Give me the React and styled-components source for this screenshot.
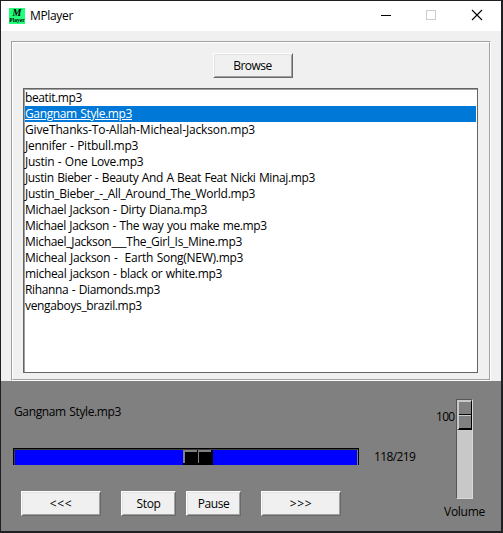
import React from "react";
import styled, { createGlobalStyle } from "styled-components";

const GlobalStyle = createGlobalStyle`
  * { box-sizing: border-box; }
  body {
    margin: 0;
    overflow: hidden;
    font: 12px/16px "Open Sans", "Noto Sans", sans-serif;
    color: #000;
  }
`;

const Window = styled.div`
  width: 503px;
  height: 533px;
  border: 1px solid #202022;
  border-right-width: 2px;
  border-bottom-width: 2px;
  background: #f0f0f0;
  display: flex;
  flex-direction: column;
`;

const TitleBar = styled.header`
  height: 30px;
  flex: none;
  background: #fff;
  display: flex;
  align-items: center;
  padding-left: 8px;
`;

const Label = styled.span`
  white-space: pre;
  letter-spacing: ${(p) => p.$track || 0}px;
  word-spacing: 0.7px;
`;

const Title = styled(Label)`
  flex: 1;
  margin-left: 5px;
`;

const AppIcon = styled.div`
  width: 16px;
  height: 16px;
  background: #21ff7b;
  font-family: "Liberation Serif", serif;
  text-align: center;
  white-space: nowrap;
`;

const IconInitial = styled.div`
  height: 9px;
  font-size: 10px;
  line-height: 9px;
  font-style: italic;
  font-weight: bold;
`;

const IconWord = styled.div`
  height: 7px;
  font-size: 5.5px;
  line-height: 7px;
  font-weight: bold;
`;

const Caption = styled.svg`
  width: 46px;
  height: 30px;
  display: block;
  shape-rendering: ${(p) => (p.$smooth ? "auto" : "crispEdges")};
`;

const Content = styled.main`
  height: 350px;
  flex: none;
  padding: 10px 10px 0;
`;

const Groove = styled.section`
  width: 480px;
  height: 340px;
  border: 1px solid #a0a0a0;
  border-right-color: #fff;
  border-bottom-color: #fff;
`;

const GrooveInner = styled.div`
  height: 100%;
  border: 1px solid #fff;
  border-right-color: #a0a0a0;
  border-bottom-color: #a0a0a0;
  padding: 10px 11px 0 10px;
  display: flex;
  flex-direction: column;
  align-items: center;
`;

const Button = styled.button`
  width: ${(p) => p.$w}px;
  height: 25px;
  flex: none;
  padding: 1px 0 0;
  font: inherit;
  color: inherit;
  background: #f0f0f0;
  border: 1px solid;
  border-color: #fff #696969 #696969 #fff;
  box-shadow: inset 1px 1px #e3e3e3, inset -1px -1px #a0a0a0;
`;

const BrowseButton = styled(Button)`
  margin-left: 4px;
`;

const Playlist = styled.ul`
  width: 455px;
  height: 285px;
  margin: 10px 0 0;
  padding: 1px 1px 0 1px;
  list-style: none;
  background: #fff;
  border: 1px solid #646464;
  box-shadow: inset 1px 1px #a0a0a0;
`;

const Track = styled.li`
  height: 16px;
  line-height: 16px;
  color: ${(p) => (p.$selected ? "#fff" : "#000")};
  background: ${(p) => (p.$selected ? "#0078d7" : "transparent")};
  text-decoration: ${(p) => (p.$selected ? "underline" : "none")};
`;

const Player = styled.footer`
  flex: 1;
  background: #808080;
  display: flex;
`;

const Main = styled.div`
  width: 435px;
  padding: 23px 0 0 12px;
`;

const NowPlaying = styled.div`
  padding-left: 1px;
`;

const SeekRow = styled.div`
  display: flex;
  align-items: flex-start;
  margin-top: 28px;
`;

const SeekBar = styled.div`
  width: 346px;
  height: 17px;
  border: 1px solid #000;
  border-bottom: 0;
  background: #00f;
  box-shadow: inset 1px 1px #404040, inset -1px 0 #808080;
  padding: 1px 0 0 169px;
`;

const SeekThumb = styled.div`
  width: 30px;
  height: 15px;
  background: #000;
  display: flex;
`;

const ThumbHalf = styled.i`
  width: ${(p) => p.$w}px;
  height: 13px;
  margin-right: 1px;
  border: solid #808080;
  border-width: ${(p) => (p.$first ? "2px 0 0 2px" : "2px 0 0 1px")};
`;

const Time = styled(Label)`
  margin: 1px 0 0 15px;
`;

const Controls = styled.div`
  display: flex;
  padding-left: 8px;
  margin-top: 26px;
`;

const Gap = styled.span`
  width: ${(p) => p.$w}px;
`;

const Volume = styled.aside`
  flex: 1;
  padding-top: 18px;
`;

const VolumeRow = styled.div`
  display: flex;
  height: 100px;
`;

const VolumeValue = styled(Label)`
  width: 19px;
  padding-top: 10px;
`;

const VolumeTrack = styled.div`
  width: 17px;
  height: 100px;
  margin-left: 1px;
  background: #c8c8c8;
  border: 1px solid #555;
  border-right-color: #d8d8d8;
  border-bottom-color: #d8d8d8;
`;

const VolumeThumb = styled.div`
  width: 15px;
  height: 30px;
  background: #808080;
  border: solid #c8c8c8;
  border-width: 1px 1px 1px 2px;
  border-right-color: #000;
  border-bottom-color: #000;
`;

const VolumeThumbHalf = styled.i`
  display: block;
  height: 14px;
  border-top: 1px solid #c8c8c8;
  border-bottom: 1px solid #000;
`;

const VolumeCaption = styled.div`
  padding: 5px 0 0 8px;
`;

const tracks = [
  ["beatit.mp3", -0.38],
  ["Gangnam Style.mp3", -0.37],
  ["GiveThanks-To-Allah-Micheal-Jackson.mp3", -0.14],
  ["Jennifer - Pitbull.mp3", -0.25],
  ["Justin - One Love.mp3", -0.29],
  ["Justin Bieber - Beauty And A Beat Feat Nicki Minaj.mp3", -0.375],
  ["Justin_Bieber_-_All_Around_The_World.mp3", -0.275],
  ["Michael Jackson - Dirty Diana.mp3", -0.32],
  ["Michael Jackson - The way you make me.mp3", -0.36],
  ["Michael_Jackson___The_Girl_Is_Mine.mp3", -0.295],
  ["Micheal Jackson -  Earth Song(NEW).mp3", -0.27],
  ["micheal jackson - black or white.mp3", -0.335],
  ["Rihanna - Diamonds.mp3", -0.36],
  ["vengaboys_brazil.mp3", -0.35],
];

export default function App() {
  const current = 1;
  return (
    <>
      <GlobalStyle />
      <Window>
        <TitleBar>
          <AppIcon>
            <IconInitial>M</IconInitial>
            <IconWord>Player</IconWord>
          </AppIcon>
          <Title $track={-0.34}>MPlayer</Title>
          <Caption viewBox="0 0 46 30">
            <path d="M18 14.5h10" stroke="#000" />
          </Caption>
          <Caption viewBox="0 0 46 30">
            <path d="M17.5 9.5h9v9h-9z" fill="none" stroke="#ccc" />
          </Caption>
          <Caption viewBox="0 0 46 30" $smooth>
            <path d="M17 9l10 10M27 9L17 19" stroke="#000" strokeWidth="1.1" />
          </Caption>
        </TitleBar>
        <Content>
          <Groove>
            <GrooveInner>
              <BrowseButton $w={80}>
                <Label $track={-0.5}>Browse</Label>
              </BrowseButton>
              <Playlist>
                {tracks.map(([name, spacing], i) => (
                  <Track key={name} $selected={i === current}>
                    <Label $track={spacing}>{name}</Label>
                  </Track>
                ))}
              </Playlist>
            </GrooveInner>
          </Groove>
        </Content>
        <Player>
          <Main>
            <NowPlaying>
              <Label $track={-0.37}>{tracks[current][0]}</Label>
            </NowPlaying>
            <SeekRow>
              <SeekBar>
                <SeekThumb>
                  <ThumbHalf $first $w={14} />
                  <ThumbHalf $w={13} />
                </SeekThumb>
              </SeekBar>
              <Time $track={-0.6}>118/219</Time>
            </SeekRow>
            <Controls>
              <Button $w={80}><Label $track={0.7}>{"<<<"}</Label></Button>
              <Gap $w={20} />
              <Button $w={55}><Label $track={-0.35}>Stop</Label></Button>
              <Gap $w={10} />
              <Button $w={55}><Label $track={-0.45}>Pause</Label></Button>
              <Gap $w={20} />
              <Button $w={80}><Label $track={0.7}>{">>>"}</Label></Button>
            </Controls>
          </Main>
          <Volume>
            <VolumeRow>
              <VolumeValue $track={-0.7}>100</VolumeValue>
              <VolumeTrack>
                <VolumeThumb>
                  <VolumeThumbHalf />
                  <VolumeThumbHalf />
                </VolumeThumb>
              </VolumeTrack>
            </VolumeRow>
            <VolumeCaption>
              <Label $track={-0.27}>Volume</Label>
            </VolumeCaption>
          </Volume>
        </Player>
      </Window>
    </>
  );
}
